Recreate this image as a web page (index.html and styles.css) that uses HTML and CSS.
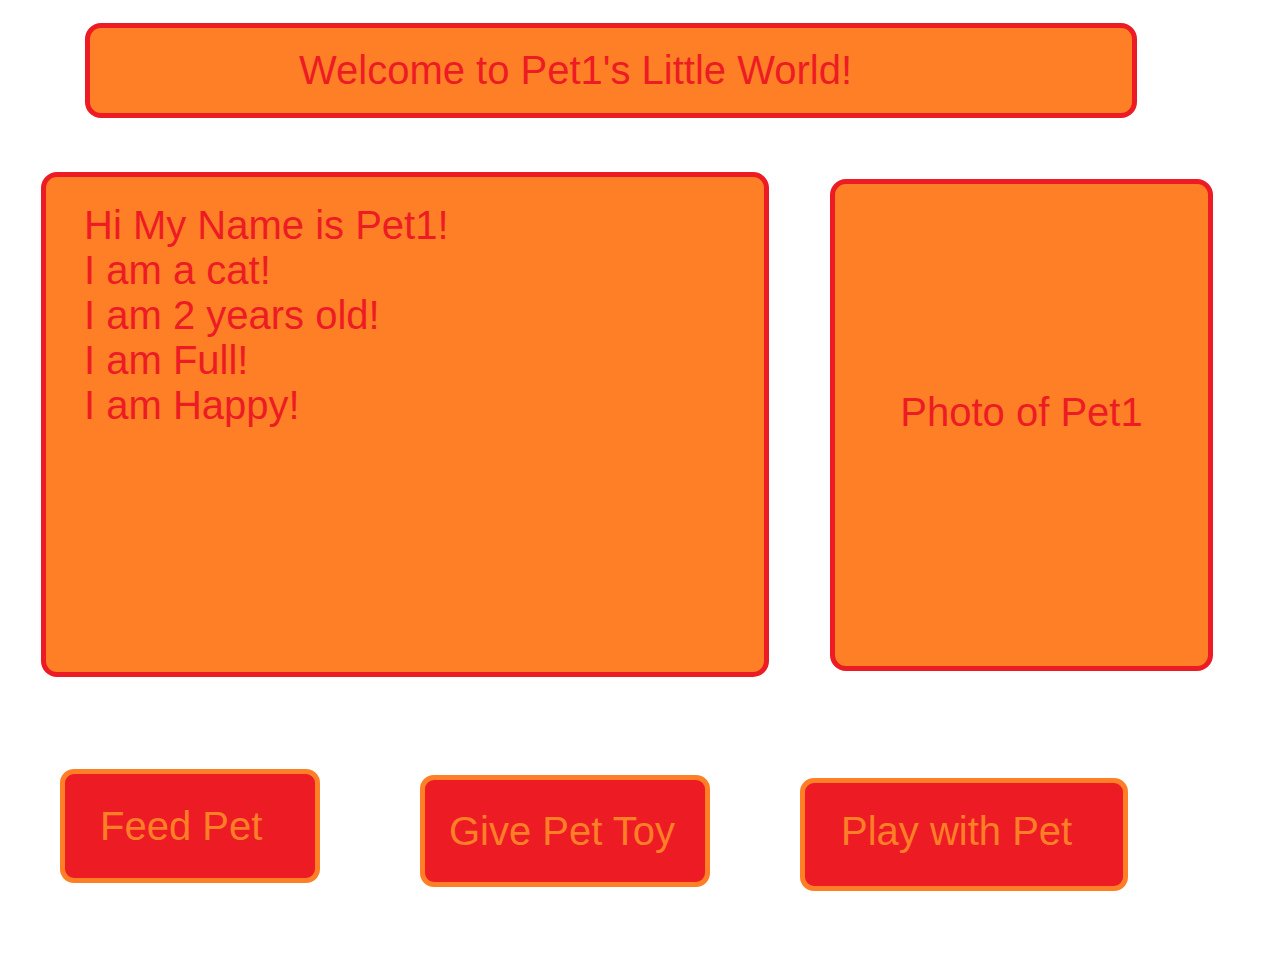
FILE: index.html
```html
<!DOCTYPE html>
<html lang="en">
<head>
<meta charset="utf-8">
<title>Pet1's Little World</title>
<link rel="stylesheet" href="styles.css">
</head>
<body>
  <header class="banner">Welcome to Pet1's Little World!</header>
  <main class="middle">
    <section class="info">
      <p class="info-line">Hi My Name is Pet1!</p>
      <p class="info-line">I am a cat!</p>
      <p class="info-line">I am 2 years old!</p>
      <p class="info-line">I am Full!</p>
      <p class="info-line">I am Happy!</p>
    </section>
    <section class="photo">Photo of Pet1</section>
  </main>
  <nav class="actions">
    <button class="btn btn-feed">Feed Pet</button>
    <button class="btn btn-toy">Give Pet Toy</button>
    <button class="btn btn-play">Play with Pet</button>
  </nav>
</body>
</html>
```

FILE: styles.css
```css
* { box-sizing: border-box; }

html, body {
  margin: 0;
  padding: 0;
  background: #ffffff;
}

body {
  width: 1280px;
  height: 960px;
  overflow: hidden;
  font-family: "Liberation Sans", Arial, sans-serif;
  font-size: 40px;
  line-height: 45px;
}

.banner {
  margin: 23px 0 0 85px;
  width: 1052px;
  height: 95px;
  background: #ff7f27;
  border: 5px solid #ed1c24;
  border-radius: 16px;
  color: #ed1c24;
  padding: 20px 0 0 209px;
  white-space: nowrap;
}

.middle {
  display: flex;
  align-items: flex-start;
  margin-top: 54px;
}

.info {
  margin-left: 41px;
  width: 728px;
  height: 505px;
  background: #ff7f27;
  border: 5px solid #ed1c24;
  border-radius: 16px;
  color: #ed1c24;
  padding: 26px 0 0 38px;
}

.info-line {
  margin: 0;
  white-space: nowrap;
}

.photo {
  margin: 7px 0 0 61px;
  width: 383px;
  height: 492px;
  background: #ff7f27;
  border: 5px solid #ed1c24;
  border-radius: 16px;
  color: #ed1c24;
  text-align: center;
  padding-top: 206px;
  white-space: nowrap;
}

.actions {
  display: flex;
  align-items: flex-start;
  margin-top: 92px;
}

.btn {
  font-family: inherit;
  font-size: 40px;
  line-height: 45px;
  color: #ff7f27;
  background: #ed1c24;
  border: 5px solid #ff7f27;
  border-radius: 14px;
  text-align: left;
  white-space: nowrap;
  display: block;
  margin: 0;
  padding-top: 0;
  padding-bottom: 0;
}

.btn-feed {
  margin-left: 60px;
  width: 260px;
  height: 114px;
  padding-left: 35px;
}

.btn-toy {
  margin: 6px 0 0 100px;
  width: 290px;
  height: 112px;
  padding-left: 24px;
}

.btn-play {
  margin: 9px 0 0 90px;
  width: 328px;
  height: 113px;
  padding-left: 36px;
  padding-bottom: 6px;
}
```
